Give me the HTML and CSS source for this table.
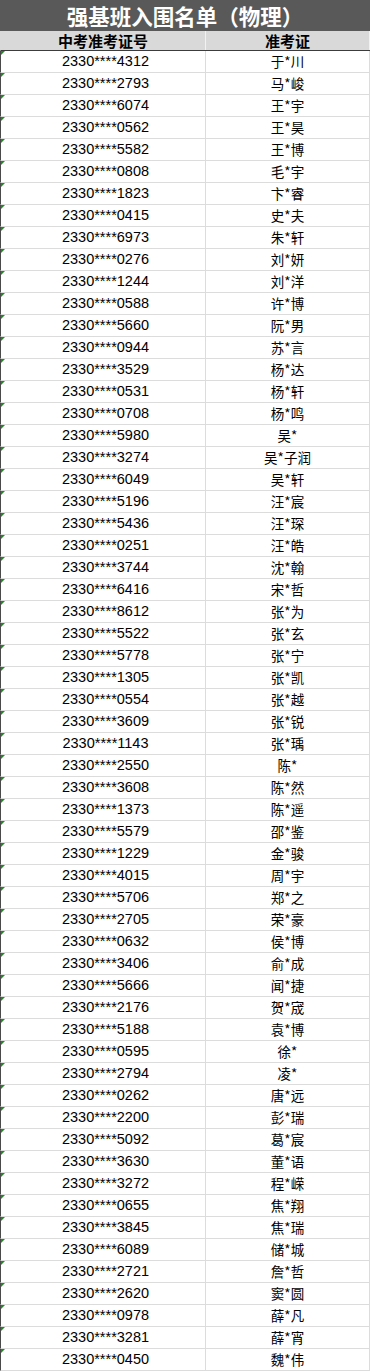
FILE: index.html
```html
<!DOCTYPE html>
<html lang="zh-CN">
<head>
<meta charset="utf-8">
<title>强基班入围名单（物理）</title>
<link rel="stylesheet" href="styles.css">
</head>
<body>
<div class="sheet">
  <div class="title">强基班入围名单（物理）</div>
  <div class="row head"><div class="c1">中考准考证号</div><div class="c2">准考证</div></div>
  <div class="row"><div class="c1">2330****4312</div><div class="c2">于*川</div></div>
  <div class="row"><div class="c1">2330****2793</div><div class="c2">马*峻</div></div>
  <div class="row"><div class="c1">2330****6074</div><div class="c2">王*宇</div></div>
  <div class="row"><div class="c1">2330****0562</div><div class="c2">王*昊</div></div>
  <div class="row"><div class="c1">2330****5582</div><div class="c2">王*博</div></div>
  <div class="row"><div class="c1">2330****0808</div><div class="c2">毛*宇</div></div>
  <div class="row"><div class="c1">2330****1823</div><div class="c2">卞*睿</div></div>
  <div class="row"><div class="c1">2330****0415</div><div class="c2">史*夫</div></div>
  <div class="row"><div class="c1">2330****6973</div><div class="c2">朱*轩</div></div>
  <div class="row"><div class="c1">2330****0276</div><div class="c2">刘*妍</div></div>
  <div class="row"><div class="c1">2330****1244</div><div class="c2">刘*洋</div></div>
  <div class="row"><div class="c1">2330****0588</div><div class="c2">许*博</div></div>
  <div class="row"><div class="c1">2330****5660</div><div class="c2">阮*男</div></div>
  <div class="row"><div class="c1">2330****0944</div><div class="c2">苏*言</div></div>
  <div class="row"><div class="c1">2330****3529</div><div class="c2">杨*达</div></div>
  <div class="row"><div class="c1">2330****0531</div><div class="c2">杨*轩</div></div>
  <div class="row"><div class="c1">2330****0708</div><div class="c2">杨*鸣</div></div>
  <div class="row"><div class="c1">2330****5980</div><div class="c2">吴*</div></div>
  <div class="row"><div class="c1">2330****3274</div><div class="c2">吴*子润</div></div>
  <div class="row"><div class="c1">2330****6049</div><div class="c2">吴*轩</div></div>
  <div class="row"><div class="c1">2330****5196</div><div class="c2">汪*宸</div></div>
  <div class="row"><div class="c1">2330****5436</div><div class="c2">汪*琛</div></div>
  <div class="row"><div class="c1">2330****0251</div><div class="c2">汪*皓</div></div>
  <div class="row"><div class="c1">2330****3744</div><div class="c2">沈*翰</div></div>
  <div class="row"><div class="c1">2330****6416</div><div class="c2">宋*哲</div></div>
  <div class="row"><div class="c1">2330****8612</div><div class="c2">张*为</div></div>
  <div class="row"><div class="c1">2330****5522</div><div class="c2">张*玄</div></div>
  <div class="row"><div class="c1">2330****5778</div><div class="c2">张*宁</div></div>
  <div class="row"><div class="c1">2330****1305</div><div class="c2">张*凯</div></div>
  <div class="row"><div class="c1">2330****0554</div><div class="c2">张*越</div></div>
  <div class="row"><div class="c1">2330****3609</div><div class="c2">张*锐</div></div>
  <div class="row"><div class="c1">2330****1143</div><div class="c2">张*瑀</div></div>
  <div class="row"><div class="c1">2330****2550</div><div class="c2">陈*</div></div>
  <div class="row"><div class="c1">2330****3608</div><div class="c2">陈*然</div></div>
  <div class="row"><div class="c1">2330****1373</div><div class="c2">陈*遥</div></div>
  <div class="row"><div class="c1">2330****5579</div><div class="c2">邵*鉴</div></div>
  <div class="row"><div class="c1">2330****1229</div><div class="c2">金*骏</div></div>
  <div class="row"><div class="c1">2330****4015</div><div class="c2">周*宇</div></div>
  <div class="row"><div class="c1">2330****5706</div><div class="c2">郑*之</div></div>
  <div class="row"><div class="c1">2330****2705</div><div class="c2">荣*豪</div></div>
  <div class="row"><div class="c1">2330****0632</div><div class="c2">侯*博</div></div>
  <div class="row"><div class="c1">2330****3406</div><div class="c2">俞*成</div></div>
  <div class="row"><div class="c1">2330****5666</div><div class="c2">闻*捷</div></div>
  <div class="row"><div class="c1">2330****2176</div><div class="c2">贺*宬</div></div>
  <div class="row"><div class="c1">2330****5188</div><div class="c2">袁*博</div></div>
  <div class="row"><div class="c1">2330****0595</div><div class="c2">徐*</div></div>
  <div class="row"><div class="c1">2330****2794</div><div class="c2">凌*</div></div>
  <div class="row"><div class="c1">2330****0262</div><div class="c2">唐*远</div></div>
  <div class="row"><div class="c1">2330****2200</div><div class="c2">彭*瑞</div></div>
  <div class="row"><div class="c1">2330****5092</div><div class="c2">葛*宸</div></div>
  <div class="row"><div class="c1">2330****3630</div><div class="c2">董*语</div></div>
  <div class="row"><div class="c1">2330****3272</div><div class="c2">程*嵘</div></div>
  <div class="row"><div class="c1">2330****0655</div><div class="c2">焦*翔</div></div>
  <div class="row"><div class="c1">2330****3845</div><div class="c2">焦*瑞</div></div>
  <div class="row"><div class="c1">2330****6089</div><div class="c2">储*城</div></div>
  <div class="row"><div class="c1">2330****2721</div><div class="c2">詹*哲</div></div>
  <div class="row"><div class="c1">2330****2620</div><div class="c2">窦*圆</div></div>
  <div class="row"><div class="c1">2330****0978</div><div class="c2">薛*凡</div></div>
  <div class="row"><div class="c1">2330****3281</div><div class="c2">薛*宵</div></div>
  <div class="row"><div class="c1">2330****0450</div><div class="c2">魏*伟</div></div>
</div>
</body>
</html>
```

FILE: styles.css
```css
html, body {
  margin: 0;
  padding: 0;
  background: #ffffff;
}

.sheet {
  width: 370px;
  color: #000;
}

.title {
  height: 31px;
  background: #595959;
  color: #ffffff;
  font-family: "Noto Sans CJK SC", sans-serif;
  font-weight: 700;
  font-size: 21.5px;
  line-height: 31px;
  text-align: center;
  letter-spacing: 0;
}

.row {
  display: grid;
  grid-template-columns: 205px 164px;
  border-left: 1px solid #4a4a4a;
  border-bottom: 1px solid #dcdcdc;
  height: 21px;
}

.c1,
.c2 {
  text-align: center;
  line-height: 21px;
  height: 21px;
  white-space: nowrap;
}

.c1 {
  position: relative;
  border-right: 1px solid #dcdcdc;
  font-family: "Liberation Sans", Arial, sans-serif;
  font-size: 14.5px;
  padding-left: 5px;
}

.c1::before {
  content: "";
  position: absolute;
  top: 0;
  left: 0;
  border-top: 4px solid #1f8a1f;
  border-right: 4px solid transparent;
}

.c2 {
  border-right: 1px solid #dcdcdc;
  font-family: "Noto Sans CJK SC", sans-serif;
  font-size: 13.5px;
}

.head {
  height: 19px;
  background: #d9d9d9;
  border-left: 1px solid #d9d9d9;
  border-bottom: 1px solid #3c3c3c;
}

.head .c1,
.head .c2 {
  height: 19px;
  line-height: 19px;
  font-family: "Noto Sans CJK SC", sans-serif;
  font-weight: 700;
  font-size: 15px;
  border-right: 1px solid #f2f2f2;
  padding-left: 0;
}

.head .c1::before {
  display: none;
}
```
